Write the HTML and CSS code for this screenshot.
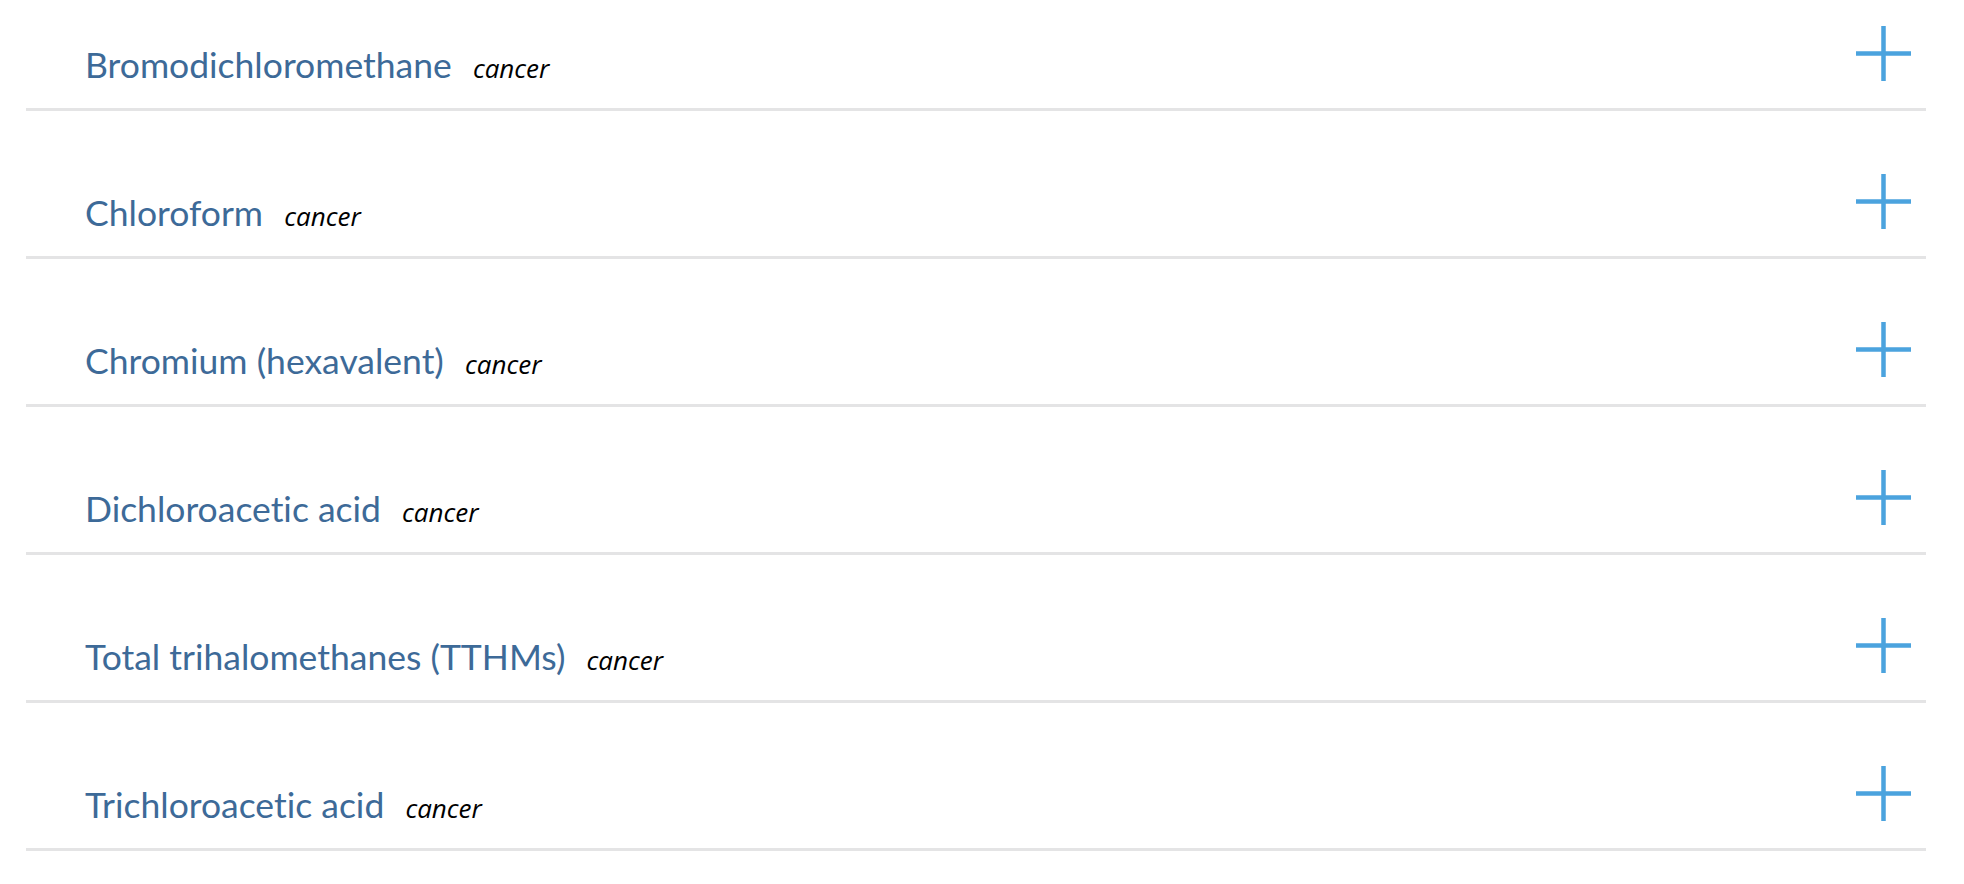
FILE: index.html
```html
<!DOCTYPE html>
<html lang="en">
  <head>
    <meta charset="UTF-8" />
    <meta name="viewport" content="width=device-width, initial-scale=1.0" />
    <title>Contaminants</title>
    <link rel="stylesheet" href="styles.css">
  </head>
  <body>
    <!-- Contaminant list -->
    <ul class="contaminant-list">
      <li class="contaminant">
        <div class="contaminant-title">
          <span class="name">Bromodichloromethane</span>
          <span class="tag">cancer</span>
        </div>
        <button class="toggle" aria-label="Expand">
          <svg viewBox="0 0 55 55" width="55" height="55"><path d="M27.5 0V55M0 27.5H55" /></svg>
        </button>
      </li>
      <li class="contaminant">
        <div class="contaminant-title">
          <span class="name">Chloroform</span>
          <span class="tag">cancer</span>
        </div>
        <button class="toggle" aria-label="Expand">
          <svg viewBox="0 0 55 55" width="55" height="55"><path d="M27.5 0V55M0 27.5H55" /></svg>
        </button>
      </li>
      <li class="contaminant">
        <div class="contaminant-title">
          <span class="name">Chromium (hexavalent)</span>
          <span class="tag">cancer</span>
        </div>
        <button class="toggle" aria-label="Expand">
          <svg viewBox="0 0 55 55" width="55" height="55"><path d="M27.5 0V55M0 27.5H55" /></svg>
        </button>
      </li>
      <li class="contaminant">
        <div class="contaminant-title">
          <span class="name">Dichloroacetic acid</span>
          <span class="tag">cancer</span>
        </div>
        <button class="toggle" aria-label="Expand">
          <svg viewBox="0 0 55 55" width="55" height="55"><path d="M27.5 0V55M0 27.5H55" /></svg>
        </button>
      </li>
      <li class="contaminant">
        <div class="contaminant-title">
          <span class="name">Total trihalomethanes (TTHMs)</span>
          <span class="tag">cancer</span>
        </div>
        <button class="toggle" aria-label="Expand">
          <svg viewBox="0 0 55 55" width="55" height="55"><path d="M27.5 0V55M0 27.5H55" /></svg>
        </button>
      </li>
      <li class="contaminant">
        <div class="contaminant-title">
          <span class="name">Trichloroacetic acid</span>
          <span class="tag">cancer</span>
        </div>
        <button class="toggle" aria-label="Expand">
          <svg viewBox="0 0 55 55" width="55" height="55"><path d="M27.5 0V55M0 27.5H55" /></svg>
        </button>
      </li>
    </ul>
  </body>
</html>
```

FILE: styles.css
```css
/* General Styles */
body {
  font-family: Lato, "Open Sans", sans-serif;
  margin: 0;
  padding: 0;
  background-color: #fff;
  overflow: hidden;
}

/* List */
.contaminant-list {
  list-style-type: none;
  margin: -37px 38px 0 26px;
  padding: 0;
}

.contaminant {
  display: flex;
  justify-content: space-between;
  align-items: flex-end;
  height: 145px;
  border-bottom: 3px solid #e4e4e5;
}

.contaminant-title {
  padding: 0 0 21px 59px;
  line-height: 1.2;
  font-variant-ligatures: none;
}

.contaminant-title .name {
  font-size: 35.5px;
  color: #3d6a98;
  margin-right: 17px;
}

.contaminant-title .tag {
  font-family: "Open Sans", sans-serif;
  font-style: italic;
  font-size: 26px;
  color: #000;
}

/* Plus toggle */
.toggle {
  background: none;
  border: none;
  padding: 0;
  margin: 0 15px 27px 0;
  width: 55px;
  height: 55px;
  cursor: pointer;
}

.toggle svg {
  display: block;
}

.toggle path {
  stroke: #4ba3de;
  stroke-width: 4.5;
  fill: none;
}
```
